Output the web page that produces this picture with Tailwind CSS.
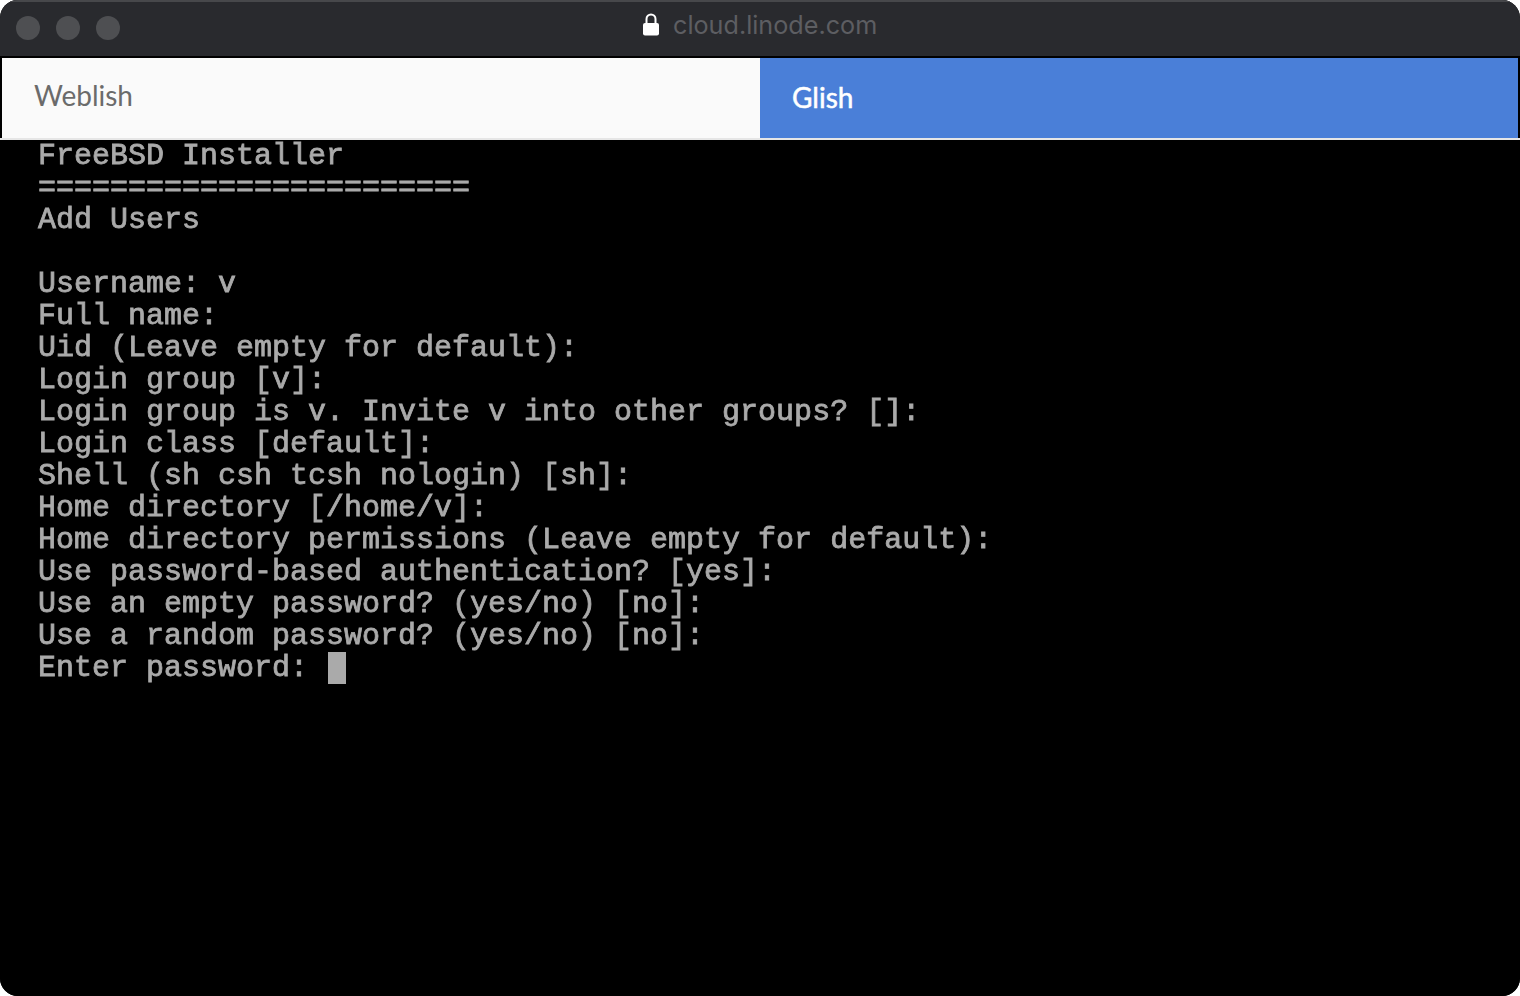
<!DOCTYPE html>
<html lang="en">
<head>
    <meta charset="UTF-8">
    <meta name="viewport" content="width=device-width, initial-scale=1.0">
    <title>Glish</title>
    <script src="https://cdn.jsdelivr.net/npm/@tailwindcss/browser@4"></script>
</head>
<body class="bg-white overflow-hidden">
    <div class="h-[996px] w-[1520px] flex flex-col rounded-[18px] overflow-hidden bg-black">
        <!-- Title bar -->
        <div class="h-[56px] shrink-0 bg-[#292a2e] border-t-2 border-[#47484b] relative flex items-center pl-4 pb-[2px] gap-4">
            <span class="w-6 h-6 rounded-full bg-[#4e4f52]"></span>
            <span class="w-6 h-6 rounded-full bg-[#4e4f52]"></span>
            <span class="w-6 h-6 rounded-full bg-[#4e4f52]"></span>
            <div class="absolute left-[643px] top-[9px] flex items-center">
                <svg width="16" height="24" viewBox="0 0 16 24" class="mr-[14px]">
                    <path d="M3.5 11V6a4.5 4.5 0 0 1 9 0V11" fill="none" stroke="#fff" stroke-width="2"/>
                    <rect x="0" y="10" width="16" height="12.5" rx="2" fill="#fff"/>
                </svg>
                <div class="w-[204px] overflow-hidden whitespace-nowrap font-['Inter',sans-serif] text-[25.2px] leading-[28px] text-[#5d5e62]">cloud.linode.com</div>
            </div>
        </div>
        <!-- Tabs -->
        <div class="h-[84px] shrink-0 bg-black pt-[2px] px-[2px] flex flex-col">
            <div class="flex h-[80px]">
                <div class="w-[758px] bg-[#fafafa] pl-[32px] pt-[19px] font-['Lato',sans-serif] text-[28px] leading-[36px] text-[#6b6b6b]">Weblish</div>
                <div class="flex-1 bg-[#4a7fd8] pl-[32px] pt-[21px] font-['Lato',sans-serif] text-[28px] leading-[36px] text-white [-webkit-text-stroke:0.5px_#ffffff]">Glish</div>
            </div>
            <div class="h-[2px] -mx-[2px] bg-[#e6e6e6]"></div>
        </div>
        <!-- Console -->
        <pre class="flex-1 bg-black pl-[38px] font-['Liberation_Mono',monospace] text-[30px] leading-[32px] text-[#aaaaaa] [-webkit-text-stroke:0.8px_#aaaaaa] blur-[0.5px]">FreeBSD Installer
========================
Add Users

Username: v
Full name:
Uid (Leave empty for default):
Login group [v]:
Login group is v. Invite v into other groups? []:
Login class [default]:
Shell (sh csh tcsh nologin) [sh]:
Home directory [/home/v]:
Home directory permissions (Leave empty for default):
Use password-based authentication? [yes]:
Use an empty password? (yes/no) [no]:
Use a random password? (yes/no) [no]:
Enter password: <span class="inline-block w-[18px] h-[32px] ml-[2px] align-top bg-[#aaaaaa]"></span></pre>
    </div>
</body>
</html>
